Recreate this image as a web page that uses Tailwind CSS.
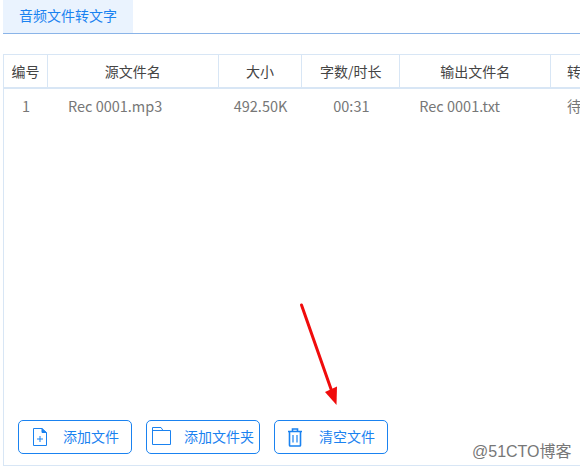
<!DOCTYPE html>
<html lang="en">
<head>
    <meta charset="UTF-8">
    <title>音频文件转文字</title>
    <script src="https://cdn.jsdelivr.net/npm/@tailwindcss/browser@4"></script>
</head>
<body class="bg-white w-[580px] h-[472px] overflow-hidden relative font-['Noto_Sans_CJK_SC',sans-serif] text-[14px]">
    <div class="pl-[3px]">
        <!-- tabs -->
        <div class="h-[34px] border-b border-[#8ab4e8]">
            <div class="w-[130px] h-[33px] pb-[3px] bg-[#eaf3fe] text-[#1a82f0] flex items-center justify-center">音频文件转文字</div>
        </div>

        <!-- table panel -->
        <div class="mt-[20px] h-[412px] border-l border-t border-b border-[#d8e6f5] flex flex-col w-[577px]">
            <div class="flex h-[34px] border-b-[2px] border-[#d8e6f5] text-[#444] shrink-0">
                <div class="w-[44px] flex items-center justify-center border-r border-[#d8e6f5]">编号</div>
                <div class="w-[171px] flex items-center justify-center border-r border-[#d8e6f5]">源文件名</div>
                <div class="w-[84px] flex items-center justify-center border-r border-[#d8e6f5]">大小</div>
                <div class="w-[98px] flex items-center justify-center border-r border-[#d8e6f5]">字数/时长</div>
                <div class="w-[151px] flex items-center justify-center border-r border-[#d8e6f5]">输出文件名</div>
                <div class="pl-[16px] flex items-center whitespace-nowrap overflow-hidden w-[29px]">转换状态</div>
            </div>
            <div class="flex h-[34px] text-[14.5px] text-[#777] shrink-0">
                <div class="w-[44px] flex items-center justify-center">1</div>
                <div class="w-[171px] flex items-center pl-[20px]">Rec 0001.mp3</div>
                <div class="w-[84px] flex items-center justify-center">492.50K</div>
                <div class="w-[98px] flex items-center justify-center">00:31</div>
                <div class="w-[151px] flex items-center pl-[19px]">Rec 0001.txt</div>
                <div class="pl-[16px] flex items-center whitespace-nowrap overflow-hidden w-[29px]">待转换</div>
            </div>

            <!-- buttons -->
            <div class="mt-auto mb-[11px] ml-[14px] flex gap-[14px] text-[#1a82f0]">
                <button class="w-[114px] h-[34px] border border-[#1a82f0] rounded-[5px] flex items-center">
                    <svg class="ml-[14px] w-[14px] h-[18px]" viewBox="0 0 14 18" fill="none" stroke="#1a82f0" stroke-width="1">
                        <path d="M.5 .5H9L13.500 4.500V17.500H.5Z"/>
                        <path d="M9 .5V4.500H13.500" fill="#1a82f0"/>
                        <path d="M7 8V14M4 11H10"/>
                    </svg>
                    <span class="ml-[16px] pb-[1px]">添加文件</span>
                </button>
                <button class="w-[114px] h-[34px] border border-[#1a82f0] rounded-[5px] flex items-center">
                    <svg class="ml-[5px] w-[19px] h-[18px] mb-[2px]" viewBox="0 0 19 18" fill="none" stroke="#1a82f0" stroke-width="1">
                        <path d="M.5 17.500V.5H9L11 3.500H18.500V17.500Z"/>
                        <path d="M.5 3.500H11"/>
                    </svg>
                    <span class="ml-[13px] pb-[1px] whitespace-nowrap">添加文件夹</span>
                </button>
                <button class="w-[114px] h-[34px] border border-[#1a82f0] rounded-[5px] flex items-center">
                    <svg class="ml-[12px] w-[16px] h-[19px]" viewBox="0 0 16 19" fill="none" stroke="#1a82f0" stroke-width="1.600">
                        <path d="M1 3.500H15M5.500 3.500V1H10.500V3.500"/>
                        <path d="M2.500 3.500V17.200Q2.500 18 3.300 18H12.700Q13.500 18 13.500 17.200V3.500"/>
                        <path d="M6 7V14.500M10 7V14.500" stroke-width="1.200"/>
                    </svg>
                    <span class="ml-[16px] pb-[1px]">清空文件</span>
                </button>
            </div>
        </div>
    </div>

    <!-- annotation arrow -->
    <svg class="absolute left-0 top-0 w-[580px] h-[472px] pointer-events-none" viewBox="0 0 580 472" fill="none">
        <path d="M301.500 305L331 389" stroke="#f00c0c" stroke-width="3" stroke-linecap="round"/>
        <path d="M325 392L336.500 405L337 386.500Z" fill="#f00c0c"/>
    </svg>

    <!-- watermark -->
    <div class="absolute left-[472px] top-[442px] text-[16px] leading-[20px] text-[#777] whitespace-nowrap font-['Liberation_Sans','Noto_Sans_CJK_SC',sans-serif]">@51CTO博客</div>
</body>
</html>
